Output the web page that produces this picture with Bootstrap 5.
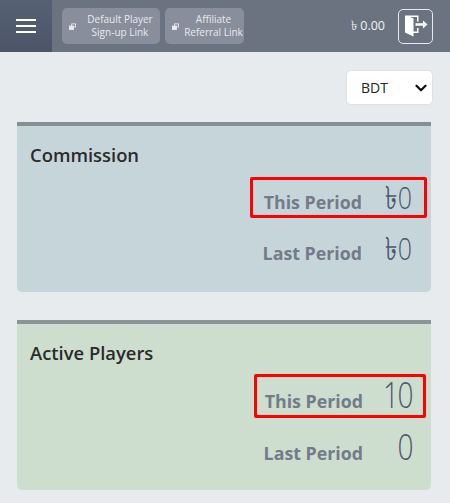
<!doctype html>
<html lang="en"><head><meta charset="utf-8"><title>Dashboard</title>
<link rel="stylesheet" href="https://cdn.jsdelivr.net/npm/bootstrap@5.3.0/dist/css/bootstrap.min.css">
<style>
html,body{height:503px;overflow:hidden}
body{background:#e7ebee;font-family:"Open Sans","Noto Sans",sans-serif;color:#2c2c2c}
.topbar{height:52px;background:#6b7280}
.menu-cell{width:52px;height:52px;background:linear-gradient(#566173,#4b5567);gap:4px}
.menu-cell span{display:block;width:20px;height:2px;background:#fff}
.link-tile{height:36px;background:#898e9c;border-radius:5px;color:#e8eaee;font-size:10px;line-height:13px;padding:0 0 0 7px;text-align:center}
.link-tile svg{margin-right:4px}
.tile-a{width:98px;margin-left:10px}.tile-b{width:79px;margin-left:5px}
.balance{font-size:12.5px;color:#f1f2f4;margin-right:13px}
.logout{width:35px;height:35px;border:1px solid #e8e9ec;border-radius:5px;margin-right:17px}
.cur-select{width:87px;height:35px;font-size:14px;margin:18px 17px 17px 0;padding:0 0 0 14px;border-radius:5px;color:#212529;font-family:"Open Sans",sans-serif;background-position:right 5px center;background-size:12px;background-image:url("data:image/svg+xml,%3csvg xmlns='http://www.w3.org/2000/svg' viewBox='0 0 16 16'%3e%3cpath fill='none' stroke='%23111' stroke-linecap='round' stroke-linejoin='round' stroke-width='3' d='m2 5 6 6 6-6'/%3e%3c/svg%3e")}
.stat{margin:0 19px 28px 17px;height:170px;border:0;border-top:4px solid #868e96;border-radius:0 0 5px 5px;padding:17px 4px 0 13px}
.stat-blue{background:#c6d5d9}.stat-green{background:#cddece;border-top-color:#8b9598}
.stat-title{font-size:18.4px;font-weight:600;line-height:24px;height:24px;color:#2b2b2b;margin:0;white-space:nowrap}
.period{font-size:17.8px;font-weight:700;color:#747a8a;line-height:24px;white-space:nowrap}
.figure{font-weight:300;color:#4d5a70;text-align:right;white-space:nowrap;transform:scaleX(.78);transform-origin:right center}
.figure-sm{font-size:32px;line-height:34px;width:50px}
.figure-lg{font-size:36px;line-height:36px;width:49px;letter-spacing:-2px}
.stat-line{border:3px solid transparent;border-radius:2px}
.line-sm{height:41px;width:177px;padding-right:12px}
.line-lg{height:44px;width:172px;margin-right:1px;padding-right:11px}
.hl{border-color:#f00}
.gap-sm-a{margin-top:10px}.gap-lg-a{margin-top:9px}.gap-lg-b{margin-top:8px}
</style></head>
<body>
<nav class="topbar d-flex align-items-center">
 <button type="button" class="menu-cell btn rounded-0 border-0 p-0 d-flex flex-column align-items-center justify-content-center" aria-label="Menu"><span></span><span></span><span></span></button>
 <a class="link-tile tile-a d-flex align-items-center text-decoration-none"><svg width="7" height="7" viewBox="0 0 8 8" fill="none" stroke="#e8eaee" class="flex-shrink-0"><rect x="3" y="1" width="4.5" height="3.5"/><rect x="0.5" y="3.5" width="4.5" height="4" fill="#e8eaee"/></svg><span class="flex-grow-1">Default Player<br>Sign-up Link</span></a>
 <a class="link-tile tile-b d-flex align-items-center text-decoration-none"><svg width="7" height="7" viewBox="0 0 8 8" fill="none" stroke="#e8eaee" class="flex-shrink-0"><rect x="3" y="1" width="4.5" height="3.5"/><rect x="0.5" y="3.5" width="4.5" height="4" fill="#e8eaee"/></svg><span class="flex-grow-1">Affiliate<br>Referral Link</span></a>
 <span class="balance ms-auto">৳ 0.00</span>
 <a class="logout d-flex align-items-center justify-content-center" aria-label="Log out"><svg width="24" height="24" viewBox="0 0 24 24"><path d="M1 1.500H14.500V7.500H13V3H6.500L9.500 4.500V17.500H13V14H14.500V19H9.500V22.500L1 18.500z" fill="#fff"/><path d="M11.500 9.200H19V6.500L23.500 10.500 19 14.500V11.800H11.500z" fill="#fff"/></svg></a>
</nav>
<div class="d-flex justify-content-end"><select class="form-select cur-select" aria-label="Currency"><option>BDT</option></select></div>
<section class="card stat stat-blue">
 <h2 class="stat-title">Commission</h2>
 <div class="d-flex justify-content-end gap-sm-a"><div class="stat-line line-sm hl d-flex align-items-baseline justify-content-end"><span class="period">This Period</span><span class="figure figure-sm">৳0</span></div></div>
 <div class="d-flex justify-content-end gap-sm-a"><div class="stat-line line-sm d-flex align-items-baseline justify-content-end"><span class="period">Last Period</span><span class="figure figure-sm">৳0</span></div></div>
</section>
<section class="card stat stat-green">
 <h2 class="stat-title">Active Players</h2>
 <div class="d-flex justify-content-end gap-lg-a"><div class="stat-line line-lg hl d-flex align-items-baseline justify-content-end"><span class="period">This Period</span><span class="figure figure-lg">10</span></div></div>
 <div class="d-flex justify-content-end gap-lg-b"><div class="stat-line line-lg d-flex align-items-baseline justify-content-end"><span class="period">Last Period</span><span class="figure figure-lg">0</span></div></div>
</section>
<script src="https://cdn.jsdelivr.net/npm/bootstrap@5.3.0/dist/js/bootstrap.bundle.min.js"></script>
</body></html>
